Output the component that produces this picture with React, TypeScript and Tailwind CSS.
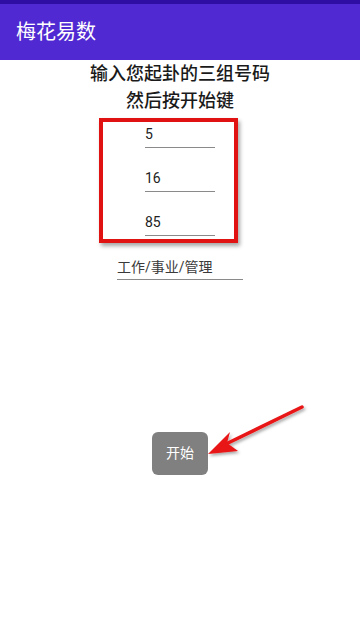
import React from "react";

export default function App() {
  return (
    <div
      className="relative w-[360px] h-[620px] bg-white overflow-hidden"
      style={{ fontFamily: "Roboto, 'Noto Sans CJK SC', sans-serif" }}
    >
      <div className="h-[4px] bg-[#2f0fa3]" />
      <div className="h-[56px] bg-[#5129d2] flex items-center pl-[16px]">
        <span className="text-white text-[20px] leading-none">梅花易数</span>
      </div>

      <div className="flex flex-col items-center">
        <div className="text-[18px] leading-[27px] font-medium text-[#1a1a1a] text-center">
          <div>输入您起卦的三组号码</div>
          <div>然后按开始键</div>
        </div>
      </div>

      <div className="mt-[4px] ml-[99px] w-[139px] h-[125px] border-4 border-[#e01212] shadow-[2px_3px_4px_rgba(0,0,0,0.35)] flex flex-col pt-[2px]">
        <div className="ml-[42px] w-[70px] border-b border-[#8a8a8a] text-[14px] leading-[20px] pb-[3px] text-[#222]">5</div>
        <div className="mt-[20px] ml-[42px] w-[70px] border-b border-[#8a8a8a] text-[14px] leading-[20px] pb-[3px] text-[#222]">16</div>
        <div className="mt-[20px] ml-[42px] w-[70px] border-b border-[#8a8a8a] text-[14px] leading-[20px] pb-[3px] text-[#222]">85</div>
      </div>

      <div className="mt-[14px] flex justify-center">
        <div className="w-[126px] border-b border-[#8a8a8a] text-[14px] leading-[20px] pb-[2px] text-[#3a3a3a]">工作/事业/管理</div>
      </div>

      <div className="mt-[152px] flex justify-center">
        <button className="w-[56px] h-[43px] rounded-[6px] bg-[#808080] text-white text-[14px]">开始</button>
      </div>

      <svg className="absolute left-0 top-0 pointer-events-none" width="360" height="620">
        <defs>
          <filter id="sh" x="-20%" y="-20%" width="140%" height="140%">
            <feDropShadow dx="1.5" dy="2" stdDeviation="1.5" floodColor="#000" floodOpacity="0.35" />
          </filter>
        </defs>
        <g filter="url(#sh)">
          <line x1="302" y1="407" x2="228" y2="443" stroke="#e81414" strokeWidth="3.5" strokeLinecap="round" />
          <polygon points="208,454 230,432 227,443 238,451" fill="#e81414" />
        </g>
      </svg>
    </div>
  );
}
